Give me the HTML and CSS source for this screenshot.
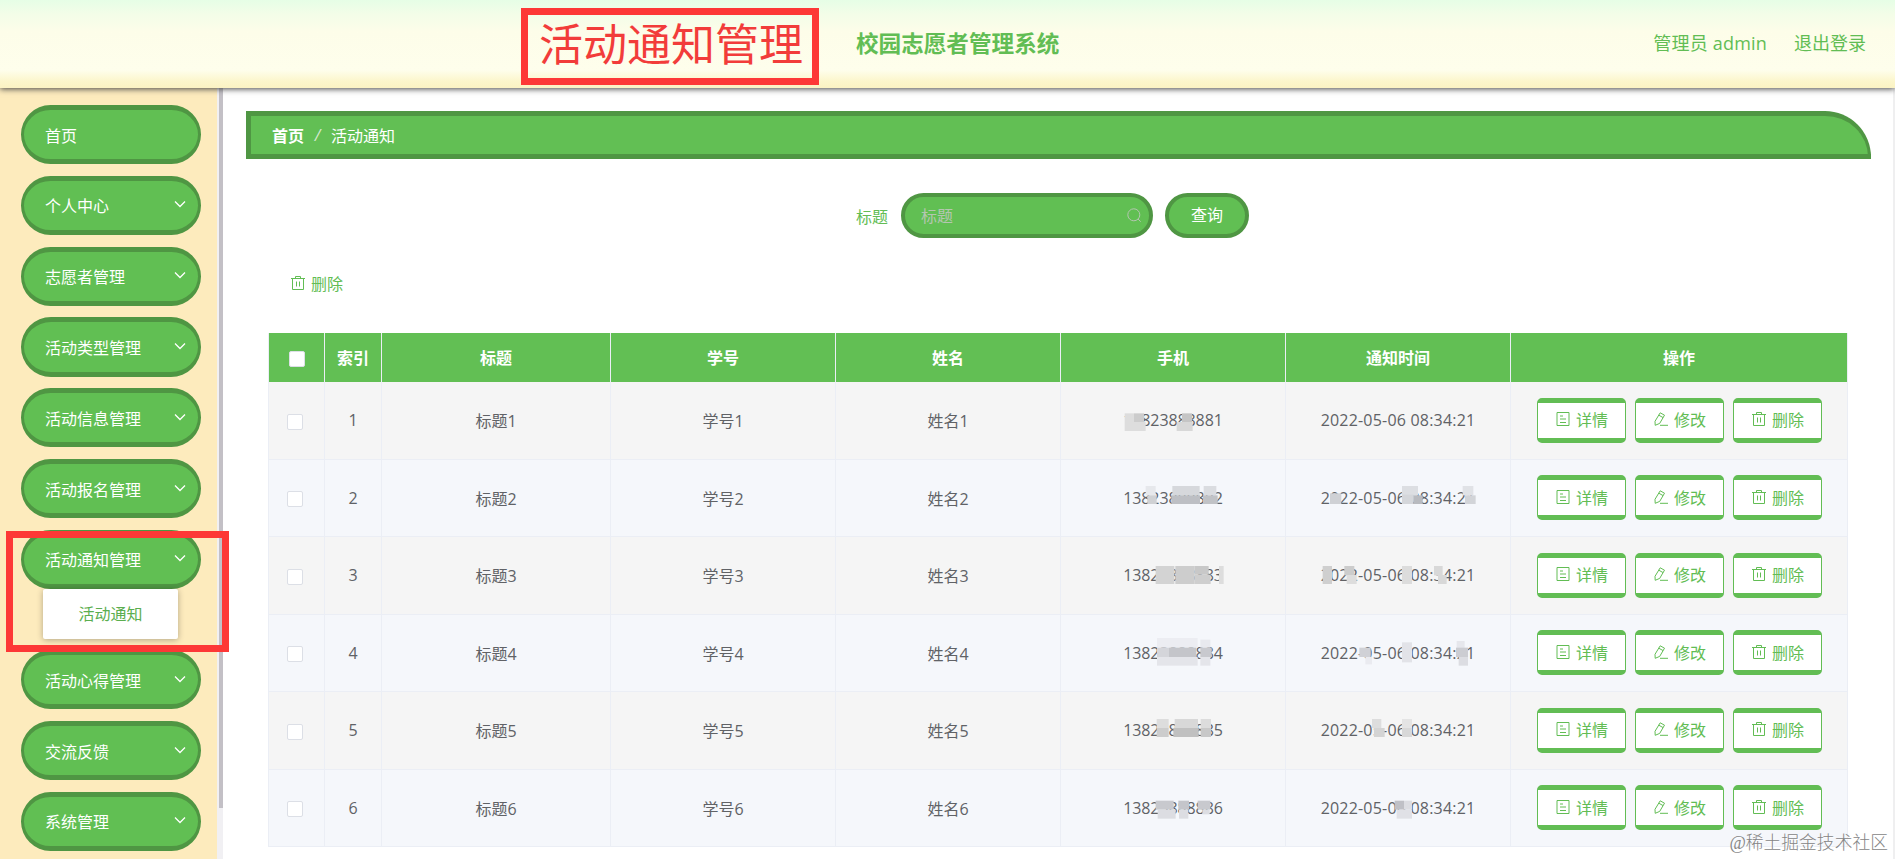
FILE: index.html
```html
<!DOCTYPE html>
<html lang="zh-CN">
<head>
  <meta charset="UTF-8" />
  <meta name="viewport" content="width=device-width, initial-scale=1.0"/>
  <title>校园志愿者管理系统</title>
  <link rel="stylesheet" href="styles.css">
</head>
<body>
  <svg class="sprite" aria-hidden="true">
    <symbol id="icon-delete" viewBox="0 0 14 14">
      <path d="M0 2.5h14M4.5 2.500v-2h5v2M1.500 2.500v11h11v-11M5.500 5.500v5M8.500 5.500v5"/>
    </symbol>
    <symbol id="icon-detail" viewBox="0 0 14 14">
      <path d="M1 .5h12v13H1zM4 4h3M4 7h6M4 10.500h6"/>
    </symbol>
    <symbol id="icon-edit" viewBox="0 0 14 14">
      <path d="M6.200 .8l4.300 2.400-4.800 8.200-4.500 1.900-.2-4zM4.800 3.200l4.300 2.400M6 13.300h8"/>
    </symbol>
    <symbol id="icon-search" viewBox="0 0 14 14">
      <circle cx="6.800" cy="6.800" r="6"/><path d="M11 11l2.700 2.700"/>
    </symbol>
    <symbol id="icon-arrow" viewBox="0 0 12 8">
      <path d="M1 1.500l5 5 5-5"/>
    </symbol>
  </svg>

  <header class="header">
    <h1>校园志愿者管理系统</h1>
    <div class="user">
      <span>管理员 admin</span>
      <a>退出登录</a>
    </div>
    <div class="mark mark-title">活动通知管理</div>
  </header>

  <div class="container">
    <aside class="sidebar">
      <ul class="menu" id="menu"></ul>
      <div class="scrollbar"><div class="thumb"></div></div>
      <div class="mark mark-menu"></div>
    </aside>

    <main class="main">
      <div class="breadcrumb"><b>首页</b><i>/</i><span>活动通知</span></div>

      <div class="search">
        <label>标题</label>
        <div class="search-input">
          <span>标题</span>
          <svg class="icon"><use href="#icon-search"/></svg>
        </div>
        <button class="btn-search">查询</button>
      </div>

      <div class="toolbar"><svg class="icon"><use href="#icon-delete"/></svg>删除</div>

      <table id="noticeTable">
        <colgroup>
          <col class="c-check"><col class="c-index"><col class="c-title"><col class="c-text">
          <col class="c-text"><col class="c-text"><col class="c-text"><col class="c-ops">
        </colgroup>
        <thead>
          <tr>
            <th><span class="checkbox"></span></th>
            <th>索引</th>
            <th>标题</th>
            <th>学号</th>
            <th>姓名</th>
            <th>手机</th>
            <th>通知时间</th>
            <th>操作</th>
          </tr>
        </thead>
        <tbody></tbody>
      </table>
    </main>
  </div>

  <div class="watermark">@稀土掘金技术社区</div>

  <script src="main.js"></script>
</body>
</html>
```
FILE: styles.css
```css
* {
  box-sizing: border-box;
}

body {
  margin: 0;
  height: 859px;
  overflow: hidden;
  position: relative;
  font-family: "Open Sans", "Noto Sans CJK SC", sans-serif;
  font-size: 16px;
  color: #606266;
  background: #fff;
}

.sprite {
  position: absolute;
  width: 0;
  height: 0;
}

.icon {
  width: 14px;
  height: 14px;
  fill: none;
  stroke: currentColor;
  stroke-width: 1;
  flex: none;
}

/* header */
.header {
  position: relative;
  z-index: 2;
  height: 88px;
  padding: 0 29px 0 856px;
  display: flex;
  align-items: center;
  justify-content: space-between;
  background: linear-gradient(#e6fee6 0, #f3fde8 14px, #fdfde9 32px, #fefeec 70px, #fcf6cc 81px, #fbf3c3 88px);
  box-shadow: 0 1px 6px #444;
  color: #62bd54;
}

.header h1 {
  margin: 0;
  font-size: 22.6px;
  line-height: 30px;
}

.user {
  display: flex;
  gap: 27px;
  font-size: 18px;
  line-height: 26px;
  margin-bottom: 2px;
}

.user span {
  letter-spacing: 0.2px;
}

.mark {
  position: absolute;
  border: 7px solid #fd3836;
}

.mark-title {
  left: 521px;
  top: 8px;
  width: 298px;
  height: 77px;
  padding-left: 11px;
  font-size: 44px;
  line-height: 58px;
  color: #f23c3a;
  white-space: nowrap;
}

.mark-menu {
  left: 6px;
  top: 443px;
  width: 223px;
  height: 121px;
}

.container {
  display: flex;
  height: 771px;
}

/* sidebar */
.sidebar {
  position: relative;
  z-index: 1;
  width: 223px;
  flex: none;
  display: flex;
  justify-content: space-between;
  background: #fdebbd;
}

.menu {
  list-style: none;
  margin: 0;
  padding: 17px 0 0 21px;
  width: 201px;
}

.menu li {
  margin-bottom: 11.5px;
}

.menu-item {
  display: flex;
  align-items: center;
  justify-content: space-between;
  height: 59.3px;
  padding: 0 12px 0 21px;
  border: 5px solid #4f9643;
  border-width: 5px 3px;
  border-radius: 30px;
  background: #61bf53;
  color: #fff;
}

.menu-item .icon {
  width: 12px;
  height: 8px;
  margin-bottom: 2px;
  stroke-width: 1.3;
}

.submenu {
  width: 135px;
  height: 49.5px;
  margin-left: 22px;
  line-height: 51px;
  text-align: center;
  background: #fff;
  color: #5bae4f;
  border-radius: 2px;
  box-shadow: 0 1px 6px rgba(0, 0, 0, 0.3);
}

.scrollbar {
  width: 6px;
  padding-left: 2px;
  background: #f1f0f3;
}

.thumb {
  height: 720px;
  background: #c3c0c6;
}

/* content */
.main {
  flex: 1;
  padding: 23px 22px 0 23px;
  border-right: 2px solid #efeff0;
}

.breadcrumb {
  display: flex;
  align-items: center;
  height: 48px;
  padding: 0 0 1px 21px;
  border: 5px solid #4f9643;
  border-right-width: 3px;
  border-radius: 0 46px 0 0;
  background: #62bf54;
  color: #fff;
}

.breadcrumb i {
  width: 27px;
  text-align: center;
  color: #d5e8d0;
}

.search {
  display: flex;
  align-items: center;
  justify-content: center;
  height: 45px;
  margin-top: 34px;
  margin-right: 12px;
  color: #62bd54;
}

.search-input {
  display: flex;
  align-items: center;
  justify-content: space-between;
  width: 252px;
  height: 45px;
  margin: 0 12px 0 13px;
  padding: 0 8px 2px 16px;
  border: 4px solid #4f9643;
  border-radius: 23px;
  background: #61bf53;
  color: #b4c6b0;
}

.btn-search {
  width: 84px;
  height: 45px;
  padding: 0 0 3px;
  border: 4px solid #4f9643;
  border-radius: 23px;
  background: #61bf53;
  color: #fff;
  font: inherit;
}

.toolbar {
  display: flex;
  align-items: center;
  gap: 6px;
  height: 30px;
  margin: 30px 0 35px 45px;
  color: #62bd54;
}

/* table */
table {
  width: 1580px;
  margin-left: 22px;
  table-layout: fixed;
  border-collapse: separate;
  border-spacing: 0;
}

.c-check, .c-index {
  width: 57px;
}

.c-title {
  width: 229px;
}

.c-text {
  width: 225px;
}

.c-ops {
  width: 337px;
}

th, td {
  padding: 0;
  text-align: center;
  border-right: 1px solid #ebeef5;
}

th {
  height: 49px;
  padding-bottom: 2px;
  background: #62bf54;
  color: #fff;
  font-weight: bold;
}

th:first-child {
  padding: 0 0 0 1px;
  border-left: 1px solid #ebeef5;
}

td {
  height: 77.5px;
  background: #f5f5f5;
  border-bottom: 1px solid #ebeef5;
}

tr:nth-child(even) td {
  background: #f5f7fb;
}

td:first-child {
  border-left: 1px solid #ebeef5;
}

.checkbox {
  display: inline-block;
  width: 16px;
  height: 16px;
  vertical-align: middle;
  border: 1px solid #dcdfe6;
  border-radius: 2px;
  background: #fff;
}

td .checkbox {
  margin-right: 4px;
}

.num {
  position: relative;
  display: inline-block;
  letter-spacing: -0.1px;
}

.num-time {
  letter-spacing: 0.2px;
}

/* mosaic over private numbers */
.mosaic {
  position: absolute;
  top: 50%;
  left: 50%;
  height: 30px;
  transform: translate(-50%, -50%);
}

.mosaic-phone {
  width: 112px;
}

.mosaic-time {
  width: 160px;
}

.ops {
  display: flex;
  gap: 9px;
  padding-left: 26px;
}

.btn {
  display: flex;
  align-items: center;
  gap: 6px;
  width: 89px;
  height: 45px;
  padding: 0 0 2px 18px;
  border: 1px solid #62bd54;
  border-width: 5px 1px;
  border-radius: 5px;
  background: #fff;
  color: #62bd54;
  font: inherit;
}

.watermark {
  position: absolute;
  z-index: 3;
  right: 7px;
  bottom: 3px;
  font-family: "Liberation Serif", "Noto Sans CJK SC", serif;
  font-size: 17.8px;
  font-weight: 300;
  line-height: 26px;
  color: #858585;
  text-shadow: 1px 1px 1px #fff;
}
```
FILE: main.js
```js
const menu = ['首页', '个人中心', '志愿者管理', '活动类型管理', '活动信息管理', '活动报名管理',
  '活动通知管理', '活动心得管理', '交流反馈', '系统管理'];

document.querySelector('#menu').innerHTML = menu.map((name, i) => `
  <li>
    <div class="menu-item">${name}${i ? '<svg class="icon"><use href="#icon-arrow"/></svg>' : ''}</div>
    ${name === '活动通知管理' ? '<div class="submenu">活动通知</div>' : ''}
  </li>
`).join('');

// mosaic blocks: x, y, width, height, color
const phoneMask = [
  [[135,-20,28,53,'#ddd'],[163,-20,30,26,'#ccc'],[163,6,35,27,'#ddd'],[307,-20,30,26,'#c5c5c5'],[291,6,48,27,'#d8d8d8']],
  [[198,-36,30,28,'#e6e8ec'],[203,-8,28,26,'#cfd1d4'],[278,-36,82,28,'#d6d8dc'],[275,-8,86,26,'#bdbfc4'],[372,-36,38,28,'#dadce0'],[370,-8,44,26,'#c0c2c6']],
  [[228,-27,56,54,'#d3d3d3'],[287,-27,58,54,'#cdcdcd'],[345,-27,42,26,'#c8c8c8'],[345,-1,48,28,'#cecece'],[418,-27,14,54,'#ddd']],
  [[232,-45,122,29,'#ecedf2'],[232,-16,36,28,'#d4d5da'],[268,-16,82,28,'#c4c5ca'],[232,12,122,26,'#e4e5ea'],[362,-40,30,24,'#e8e9ee'],[362,-16,34,28,'#c8c9ce'],[362,12,30,26,'#e4e5ea']],
  [[231,-33,36,27,'#ddd'],[231,-6,36,27,'#ccc'],[285,-33,70,27,'#d8d8d8'],[281,-6,76,27,'#c0c0c0'],[363,-33,31,27,'#dcdcdc'],[363,-6,31,27,'#c8c8c8']],
  [[228,-22,54,27,'#c8c9ce'],[234,5,54,27,'#dcdde2'],[296,-22,32,27,'#c4c5ca'],[298,5,28,27,'#dcdde2'],[354,-22,38,27,'#c8c9ce'],[368,5,22,14,'#dcdde2']]
];
const timeMask = [
  [],
  [[750,-14,34,32,'#cfd1d5'],[966,-36,48,28,'#dcdee2'],[966,-10,34,28,'#d4d6da'],[1000,-8,28,26,'#b8babf'],[1148,-36,32,28,'#e0e2e6'],[1155,-8,32,26,'#d2d4d8']],
  [[728,-27,28,54,'#cfcfcf'],[793,-27,30,28,'#ccc'],[800,0,30,27,'#ddd'],[966,-27,30,54,'#dcdcdc'],[1062,-27,26,28,'#d8d8d8'],[1074,0,26,27,'#d8d8d8']],
  [[838,-16,34,28,'#d0d1d6'],[856,12,20,22,'#eaebf0'],[966,-32,30,60,'#e2e3e8'],[1130,-36,24,22,'#e6e7ec'],[1128,-16,36,28,'#cccdd2'],[1136,12,28,26,'#dcdde2']],
  [[876,-33,28,27,'#ddd'],[882,-6,32,27,'#d4d4d4'],[966,-33,30,27,'#e4e4e4'],[966,-6,30,27,'#d8d8d8']],
  [[944,-22,28,27,'#bfc0c6'],[972,-22,24,27,'#dcdde2'],[950,5,46,27,'#e0e1e6']]
];

function mosaic(type, viewBox, blocks) {
  const rects = blocks.map(([x, y, w, h, c]) =>
    `<rect x="${x}" y="${y}" width="${w}" height="${h}" fill="${c}"/>`).join('');
  return `<svg class="mosaic mosaic-${type}" viewBox="${viewBox}">${rects}</svg>`;
}

function button(icon, text) {
  return `<button class="btn"><svg class="icon"><use href="#icon-${icon}"/></svg>${text}</button>`;
}

const tbody = document.querySelector('#noticeTable tbody');
for (let i = 1; i <= 6; i++) {
  const row = document.createElement('tr');
  row.innerHTML = `
    <td><span class="checkbox"></span></td>
    <td>${i}</td>
    <td>标题${i}</td>
    <td>学号${i}</td>
    <td>姓名${i}</td>
    <td><span class="num">1382388888${i}${mosaic('phone', '112 -45 336 90', phoneMask[i - 1])}</span></td>
    <td><span class="num num-time">2022-05-06 08:34:21${mosaic('time', '714 -45 480 90', timeMask[i - 1])}</span></td>
    <td><div class="ops">${button('detail', '详情')}${button('edit', '修改')}${button('delete', '删除')}</div></td>
  `;
  tbody.appendChild(row);
}
```
